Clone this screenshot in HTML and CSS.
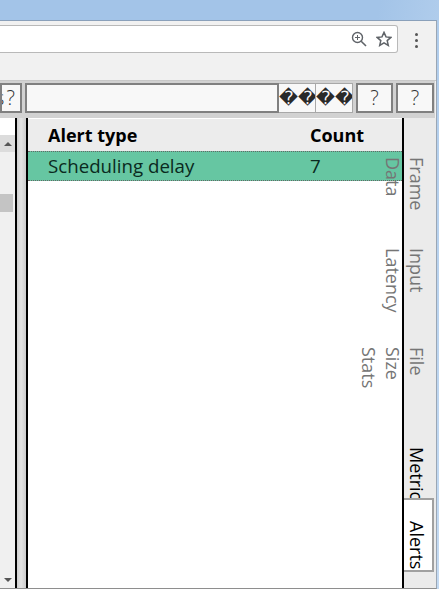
FILE: index.html
```html
<!DOCTYPE html>
<html lang="en">
<head>
<meta charset="utf-8">
<title>Alerts</title>
<link rel="stylesheet" href="styles.css">
</head>
<body>
<div class="window">
  <div class="chrome">
    <div class="address">
      <svg class="icon" viewBox="0 0 16 16" width="16" height="16"><circle cx="6.5" cy="6.5" r="5" fill="none" stroke="#5f6368" stroke-width="1.4"/><path d="M10.2 10.2L15 15" stroke="#5f6368" stroke-width="1.6" fill="none"/><path d="M4 6.5h5M6.5 4v5" stroke="#5f6368" stroke-width="1" fill="none"/></svg>
      <svg class="icon star" viewBox="0 0 16 16" width="16" height="16"><path d="M8 1.4l2 4.5 4.9.5-3.7 3.2 1.1 4.8L8 11.9l-4.3 2.5 1.1-4.8L1.1 6.4 6 5.9z" fill="none" stroke="#5f6368" stroke-width="1.5"/></svg>
    </div>
    <div class="menu"><span></span><span></span><span></span></div>
  </div>
  <div class="toolbar">
    <div class="field first"><span>s ?</span></div>
    <div class="search">
      <div class="search-input"></div>
      <div class="mini">��</div>
      <div class="mini">��</div>
    </div>
    <div class="field btn">?</div>
    <div class="field btn">?</div>
  </div>
  <div class="main">
    <div class="side">
      <div class="side-top"></div>
      <div class="scroll">
        <div class="arrow-btn"><i class="up"></i></div>
        <div class="thumb"></div>
        <div class="spacer"></div>
        <div class="arrow-btn low"><i class="down"></i></div>
      </div>
    </div>
    <div class="splitter"></div>
    <div class="content">
      <div class="row head"><span>Alert type</span><span>Count</span></div>
      <div class="row sel"><span>Scheduling delay</span><span>7</span></div>
    </div>
    <div class="tabs">
      <div class="tab t1">Frame<br>Data</div>
      <div class="tab t2">Input<br>Latency</div>
      <div class="tab t3">File<br>Size<br>Stats</div>
      <div class="tab t4 dark">Metrics</div>
      <div class="tab active dark">Alerts</div>
    </div>
  </div>
</div>
</body>
</html>
```
FILE: styles.css
```css
* { box-sizing: border-box; }
html, body { margin: 0; height: 100%; overflow: hidden; }
body {
  background: linear-gradient(100deg, #a3c4e8 0%, #a3c4e8 70%, #c4daf2 100%);
  font-family: "Open Sans", "Noto Sans", sans-serif;
  padding-top: 20px;
}
.window {
  width: 437px;
  height: 569px;
  background: #f1f1f1;
  border-top: 1px solid #8aa0ba;
  border-right: 1px solid #9aa6b4;
  border-bottom: 1px solid #8e8e8e;
  display: flex;
  flex-direction: column;
  overflow: hidden;
}
.chrome {
  height: 60px;
  flex: none;
  display: flex;
  align-items: flex-start;
  padding-top: 4px;
  border-bottom: 1px solid #c8c8c8;
}
.address {
  width: 398px;
  height: 28px;
  background: #fff;
  border: 1px solid #b9b9b9;
  border-left: 0;
  border-radius: 0 3px 3px 0;
  display: flex;
  justify-content: flex-end;
  align-items: center;
  padding-right: 5px;
  gap: 9px;
}
.icon { display: block; }
.menu {
  margin-left: 17px;
  margin-top: 8px;
  display: flex;
  flex-direction: column;
  gap: 3px;
}
.menu span { width: 3px; height: 3px; border-radius: 50%; background: #555; }
.toolbar {
  height: 37px;
  flex: none;
  background: #d2d2d2;
  display: flex;
  align-items: flex-start;
  padding-top: 2px;
  gap: 3px;
  width: 435px;
}
.field {
  height: 30px;
  border: 2px solid #808080;
  background: #f8f8f8;
  font: 300 20px/26px "Open Sans", sans-serif;
  color: #333;
  text-align: center;
}
.first {
  width: 22px;
  padding-right: 5px;
  white-space: nowrap;
  overflow: hidden;
  display: flex;
  justify-content: flex-end;
  word-spacing: -3px;
}
.first span { flex: none; }
.btn { width: 37px; }
.btn:last-child { width: 38px; }
.search { width: 328px; height: 30px; display: flex; background: #f8f8f8; }
.search-input { flex: 1; border: 2px solid #808080; }
.mini {
  width: 37px;
  height: 30px;
  border: 1px solid #a8a8a8;
  border-left: 0;
  font: 18.5px/28px "DejaVu Sans", sans-serif;
  color: #2a2a2a;
  text-align: center;
  white-space: nowrap;
  overflow: hidden;
}
.main { flex: 1; min-height: 0; display: flex; background: #fff; }
.side {
  width: 17px;
  flex: none;
  border-right: 2px solid #000;
  display: flex;
  flex-direction: column;
}
.side-top { height: 17px; background: #fff; flex: none; }
.scroll { flex: 1; background: #f0f0f0; display: flex; flex-direction: column; }
.arrow-btn {
  height: 17px;
  background: #dcdcdc;
  display: flex;
  align-items: center;
  justify-content: center;
  flex: none;
}
.arrow-btn.low { background: #f0f0f0; }
.up, .down { display: block; width: 0; height: 0; border-left: 4px solid transparent; border-right: 4px solid transparent; }
.up { border-bottom: 4px solid #555; }
.down { border-top: 4px solid #555; }
.thumb { height: 18px; width: 13px; margin-top: 42px; background: #c4c4c4; flex: none; }
.spacer { flex: 1; }
.splitter {
  width: 9px;
  flex: none;
  background: linear-gradient(90deg, #cfcfcf, #e4e4e4 45%, #cdcdcd);
}
.content {
  width: 378px;
  flex: none;
  border-left: 2px solid #000;
  border-right: 2px solid #000;
  background: #fff;
  padding-top: 1px;
}
.row {
  display: grid;
  grid-template-columns: 262px 1fr;
  padding-left: 20px;
  font-size: 18.7px;
  color: #0a2a20;
}
.head { height: 32px; background: #ececec; font-size: 18px; font-weight: 700; color: #000; line-height: 32px; }
.sel {
  height: 30px;
  line-height: 28px;
  background: #66c6a2;
  border-top: 1px dotted #666;
  border-bottom: 1px dotted #666;
}
.tabs {
  flex: 1;
  background: #ebebeb;
  display: flex;
  flex-direction: column;
  padding-top: 39px;
}
.tab {
  writing-mode: vertical-rl;
  flex: none;
  width: 30px;
  font-size: 18px;
  line-height: 24px;
  color: #757575;
  white-space: nowrap;
  padding-right: 5px;
}
.t1 { height: 91px; }
.t2 { height: 99px; }
.t3 { height: 100px; }
.t4 { height: 51px; overflow: hidden; }
.dark { color: #000; }
.active {
  height: 74px;
  padding-top: 21px;
  padding-right: 3px;
  background: #fff;
  border: 2px solid #a0a0a0;
  border-left: 0;
}
```
